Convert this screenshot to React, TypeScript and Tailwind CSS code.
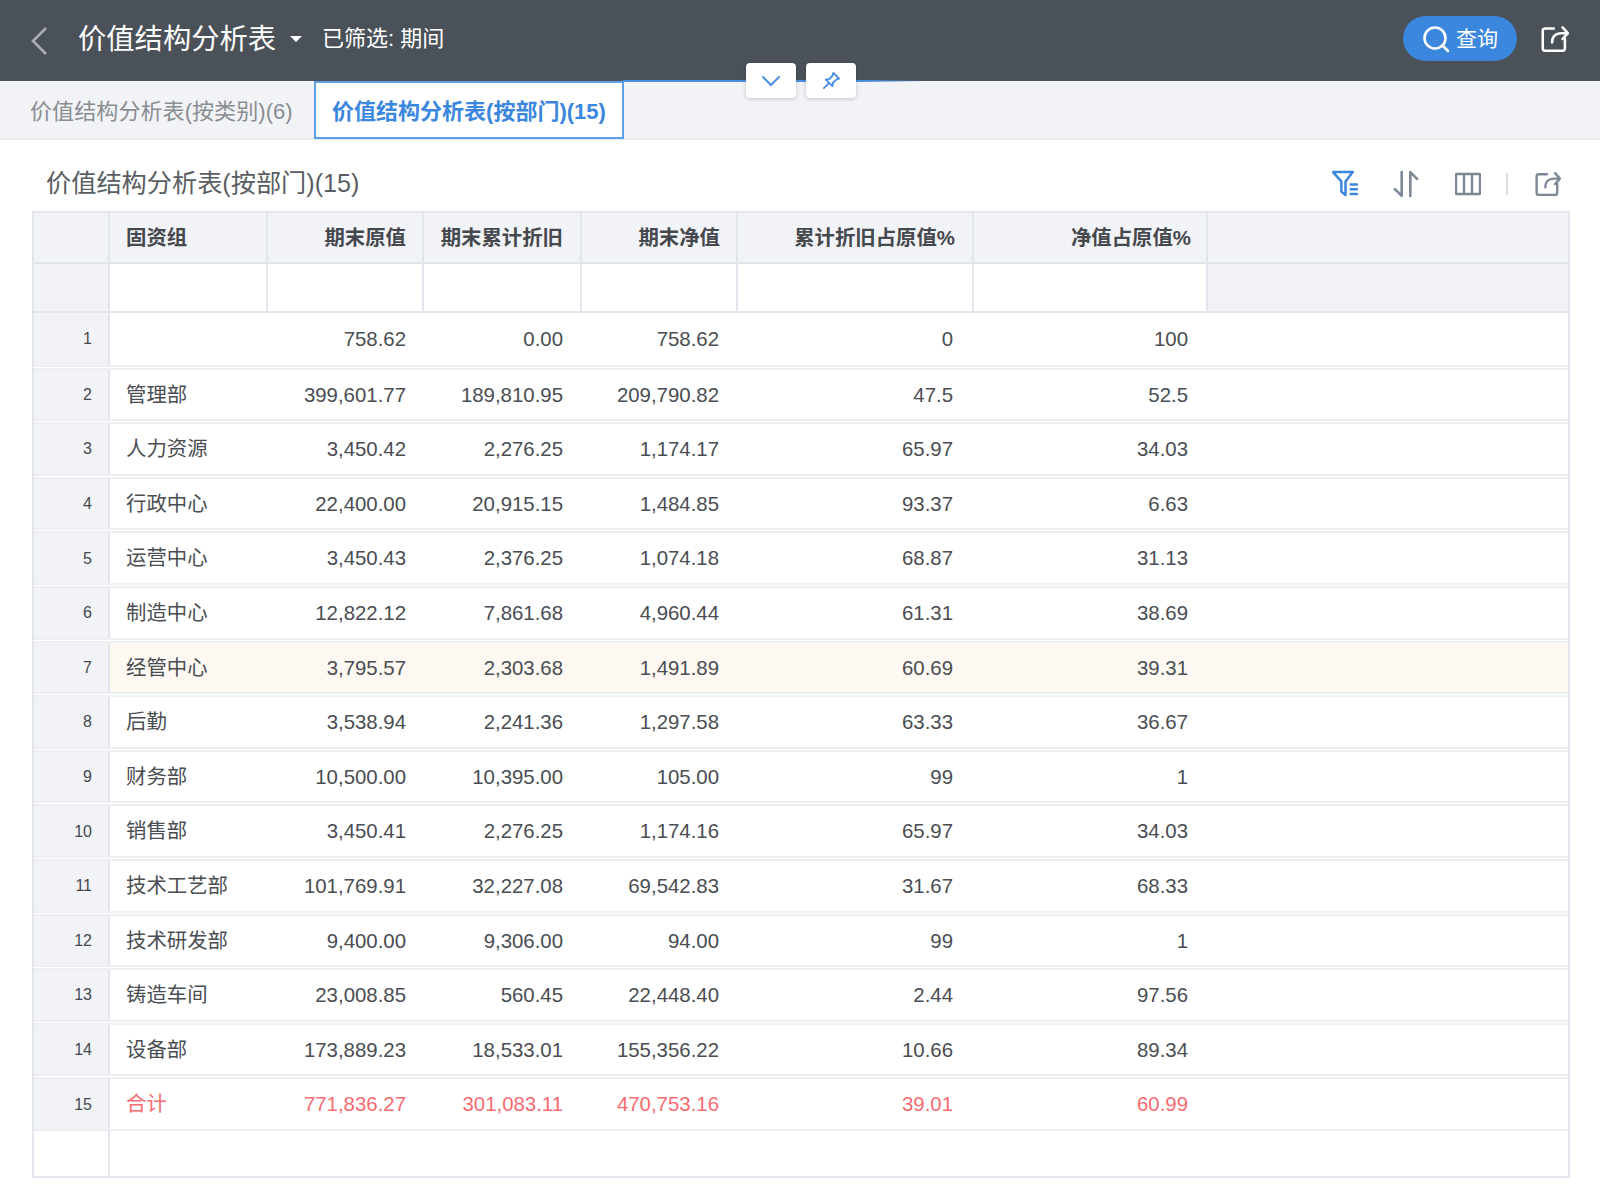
const DATA: string[][] = [
  ["1", "", "758.62", "0.00", "758.62", "0", "100"],
  ["2", "管理部", "399,601.77", "189,810.95", "209,790.82", "47.5", "52.5"],
  ["3", "人力资源", "3,450.42", "2,276.25", "1,174.17", "65.97", "34.03"],
  ["4", "行政中心", "22,400.00", "20,915.15", "1,484.85", "93.37", "6.63"],
  ["5", "运营中心", "3,450.43", "2,376.25", "1,074.18", "68.87", "31.13"],
  ["6", "制造中心", "12,822.12", "7,861.68", "4,960.44", "61.31", "38.69"],
  ["7", "经管中心", "3,795.57", "2,303.68", "1,491.89", "60.69", "39.31"],
  ["8", "后勤", "3,538.94", "2,241.36", "1,297.58", "63.33", "36.67"],
  ["9", "财务部", "10,500.00", "10,395.00", "105.00", "99", "1"],
  ["10", "销售部", "3,450.41", "2,276.25", "1,174.16", "65.97", "34.03"],
  ["11", "技术工艺部", "101,769.91", "32,227.08", "69,542.83", "31.67", "68.33"],
  ["12", "技术研发部", "9,400.00", "9,306.00", "94.00", "99", "1"],
  ["13", "铸造车间", "23,008.85", "560.45", "22,448.40", "2.44", "97.56"],
  ["14", "设备部", "173,889.23", "18,533.01", "155,356.22", "10.66", "89.34"],
  ["15", "合计", "771,836.27", "301,083.11", "470,753.16", "39.01", "60.99"],
];

const GRID = "grid grid-cols-[76px_158px_156px_158px_156px_236px_234px_1fr]";
const HEADERS = ["期末原值", "期末累计折旧", "期末净值", "累计折旧占原值%", "净值占原值%"];
const HEAD_PAD = ["pr-[16px]", "pr-[17px]", "pr-[16px]", "pr-[17px]", "pr-[15px]"];
const CELL_PAD = ["pr-[18px]", "pr-[19px]", "pr-[19px]", "pr-[21px]", "pr-[20px]"];

function ShareIcon({ className }: { className: string }) {
  return (
    <svg viewBox="2 2 24 24" fill="none" stroke="currentColor" strokeWidth="2.2" strokeLinecap="round" strokeLinejoin="round" className={className}>
      <path d="M13 5H5.500A2 2 0 0 0 3.500 7v15a2 2 0 0 0 2 2h15a2 2 0 0 0 2-2v-8" />
      <path d="M11.500 17c0-5 3-8 8-8h5" />
      <path d="M20.500 4l4.500 5-4.500 5" />
    </svg>
  );
}

export default function App() {
  return (
    <div className="w-[1600px] h-[1200px] bg-white overflow-hidden font-['Liberation_Sans','Noto_Sans_CJK_SC',sans-serif] text-[#4a4d52]">
      {/* Top bar */}
      <header className="h-[81px] bg-[#4a5158] flex items-center pb-[3px] text-white">
        <svg viewBox="0 0 20 30" fill="none" stroke="#a9adb2" strokeWidth="2.6" className="w-[20px] h-[30px] ml-[29px] mt-[3px]">
          <path d="M17 2 4 15l13 13" />
        </svg>
        <span className="ml-[29px] text-[28.3px] leading-none">价值结构分析表</span>
        <span className="ml-[14px] w-0 h-0 border-x-[6px] border-x-transparent border-t-[6px] border-t-white" />
        <span className="ml-[20px] text-[22px] leading-none">已筛选: 期间</span>
        <button className="ml-auto mb-[1px] w-[114px] h-[45px] rounded-full bg-[#3b87de] flex items-center justify-center gap-[6px] text-[21px]">
          <svg viewBox="0 0 28 28" fill="none" stroke="white" strokeWidth="2.6" strokeLinecap="round" className="w-[28px] h-[28px]">
            <circle cx="13" cy="13" r="10.500" />
            <path d="M20.500 20.500 26 26" />
          </svg>
          查询
        </button>
        <ShareIcon className="w-[28px] h-[28px] ml-[24px] mr-[31px]" />
      </header>

      {/* Tabs */}
      <nav className="relative h-[59px] bg-[#f2f3f7] border-b-2 border-[#e8e9ed] flex items-start">
        <div className="absolute left-[623px] w-[300px] -top-px h-[2px] bg-linear-to-r from-[#4a90e2] from-80% to-transparent" />
        <div className="w-[314px] h-[57px] flex items-center pl-[30px] pt-[5px] text-[22.1px] text-[#8a8d92] whitespace-nowrap">
          价值结构分析表(按类别)(6)
        </div>
        <div className="w-[310px] h-[58px] pt-[3px] bg-white border-2 border-[#5c9ee8] flex items-center justify-center text-[22px] font-bold text-[#3b87de] whitespace-nowrap">
          价值结构分析表(按部门)(15)
        </div>
        <button className="absolute left-[746px] top-[-18px] w-[50px] h-[35px] bg-white rounded-[4px] shadow-[0_1px_4px_rgba(0,0,0,0.2)] flex items-center justify-center">
          <svg viewBox="0 0 20 12" fill="none" stroke="#4a90e2" strokeWidth="2" strokeLinecap="round" className="w-[20px] h-[12px]">
            <path d="M2 2l8 8 8-8" />
          </svg>
        </button>
        <button className="absolute left-[806px] top-[-18px] w-[50px] h-[35px] bg-white rounded-[4px] shadow-[0_1px_4px_rgba(0,0,0,0.2)] flex items-center justify-center">
          <svg viewBox="0 0 20 20" fill="none" stroke="#4a90e2" strokeWidth="2" strokeLinejoin="round" strokeLinecap="round" className="w-[19px] h-[19px]">
            <path d="M12 2l6 6-3 1-3.500 3.500-.500 3.500-7-7 3.500-.500L11 5z" />
            <path d="M7 13l-5 5" />
          </svg>
        </button>
      </nav>

      {/* Title + toolbar */}
      <div className="h-[71px] flex items-center pl-[46px] pt-[16px]">
        <h1 className="text-[25.2px] leading-none font-normal text-[#5a5d62]">价值结构分析表(按部门)(15)</h1>
        <div className="ml-auto flex items-center">
          <svg viewBox="1 1 26 26" fill="none" stroke="#3b87de" strokeWidth="2.400" strokeLinejoin="round" strokeLinecap="round" className="w-[27px] h-[27px]">
            <path d="M2 3h19l-7 9v13l-4-3V12z" />
            <path d="M19 15h6M19 19.500h6M19 24h6" />
          </svg>
          <svg viewBox="1 1 26 26" fill="none" stroke="#7c8798" strokeWidth="2.400" strokeLinejoin="round" className="w-[28px] h-[28px] ml-[33px]">
            <path d="M10 2v23l-7-7" />
            <path d="M18 26V3l7 7" />
          </svg>
          <svg viewBox="1 1 26 26" fill="none" stroke="#7c8798" strokeWidth="2.400" className="w-[26px] h-[26px] ml-[35px]">
            <rect x="2" y="4" width="24" height="20" rx="1" />
            <path d="M10 4v20M18 4v20" />
          </svg>
          <span className="w-[2px] h-[22px] bg-[#d9dbe0] ml-[25px]" />
          <ShareIcon className="w-[26px] h-[26px] ml-[27px] mr-[39px] text-[#7c8798]" />
        </div>
      </div>

      {/* Table */}
      <div className="mx-[32px] w-[1538px] border-2 border-[#e2e5ec] text-[20.4px]">
        <div className={`${GRID} h-[51px] pt-[0px] bg-[#f2f3f7] border-b-2 border-[#e2e5ec] font-bold text-[#45484d]`}>
          <div className="border-r-2 border-[#e2e5ec]" />
          <div className="border-r-2 border-[#e2e5ec] flex items-center pl-[16px] pt-[2px]">固资组</div>
          {HEADERS.map((h, i) => (
            <div key={h} className={`border-r-2 border-[#e2e5ec] flex items-center justify-end pt-[2px] whitespace-nowrap ${HEAD_PAD[i]}`}>{h}</div>
          ))}
          <div />
        </div>
        <div className={`${GRID} h-[49px] border-b-2 border-[#e2e5ec]`}>
          <div className="bg-[#f2f3f7] border-r-2 border-[#e2e5ec]" />
          {[0, 1, 2, 3, 4, 5].map((i) => (
            <div key={i} className="border-r-2 border-[#e2e5ec]" />
          ))}
          <div className="bg-[#f2f3f7]" />
        </div>
        {DATA.map((row, i) => {
          const total = i === 14;
          const active = i === 6;
          const first = i === 0;
          return (
            <div
              key={row[0]}
              className={`${GRID} h-[53.6px] border-b-2 border-[#eeeff2] ${first ? "" : "border-t-2"} ${total ? "text-[#f86b70]" : "mb-px"}`}
            >
              <div className="bg-[#f2f3f7] border-r-2 border-[#e2e5ec] flex items-center justify-end pr-[16px] pt-px text-[16px] text-[#45484d]">
                {row[0]}
              </div>
              <div className={`flex items-center pl-[16px] pt-px whitespace-nowrap ${active ? "bg-[#fdf9f2]" : ""}`}>{row[1]}</div>
              {row.slice(2).map((v, j) => (
                <div key={j} className={`flex items-center justify-end pt-px ${CELL_PAD[j]} ${active ? "bg-[#fdf9f2]" : ""}`}>{v}</div>
              ))}
              <div className={active ? "bg-[#fdf9f2]" : ""} />
            </div>
          );
        })}
        <div className={`${GRID} h-[45px]`}>
          <div className="bg-white border-r-2 border-[#e2e5ec]" />
        </div>
      </div>
    </div>
  );
}
